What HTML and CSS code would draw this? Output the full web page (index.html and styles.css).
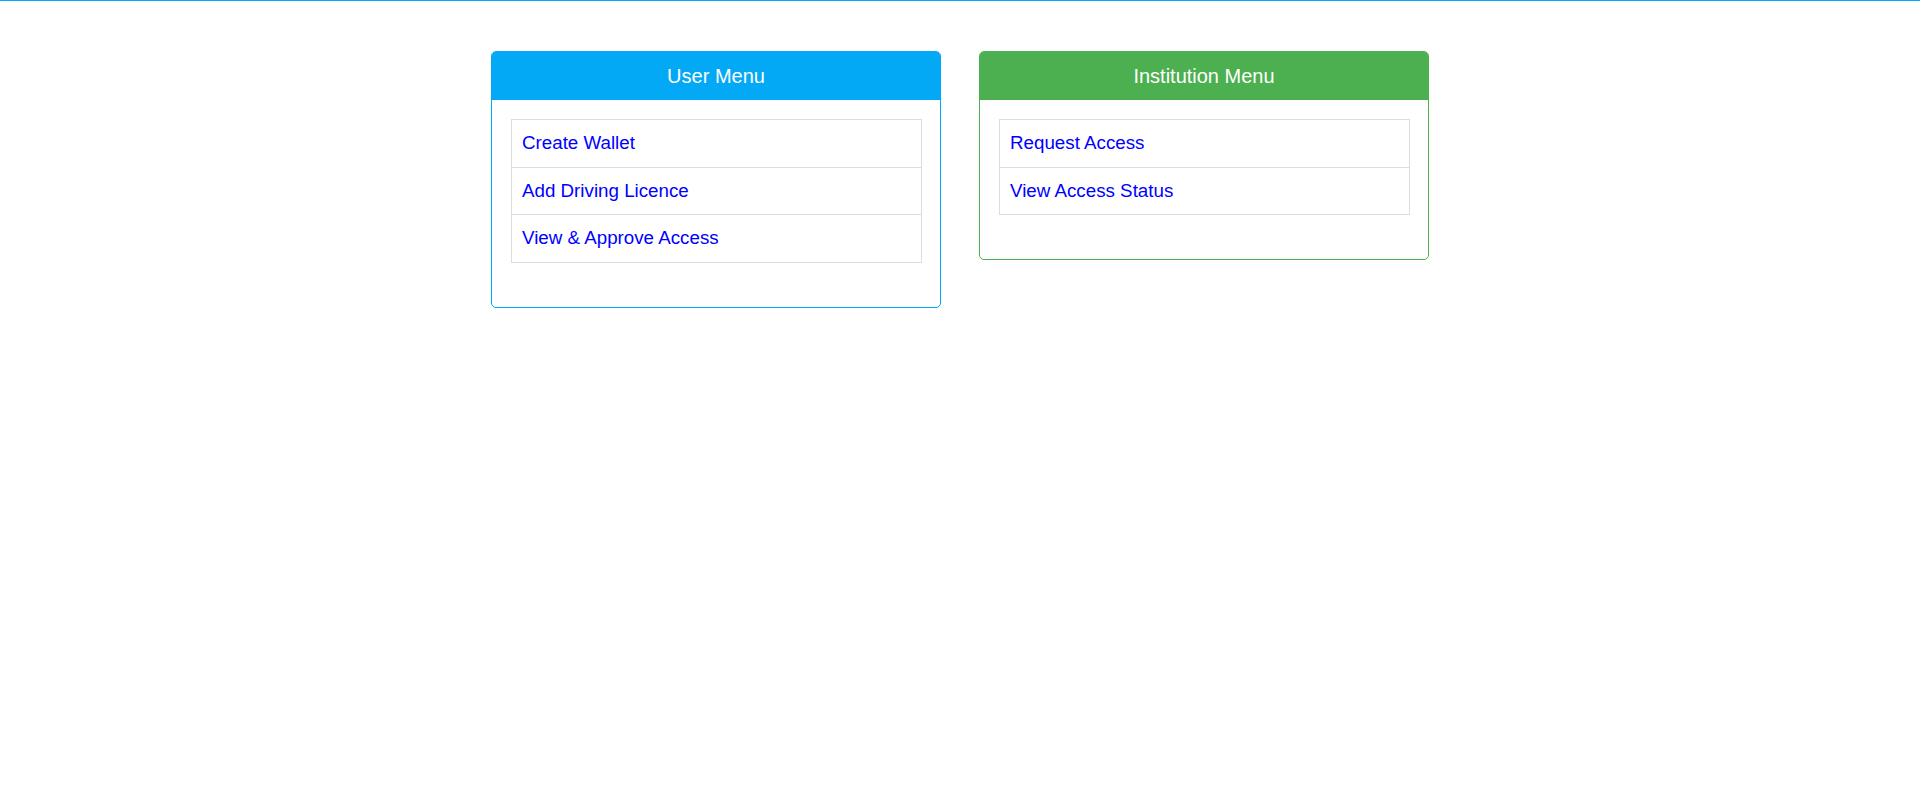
FILE: index.html
```html
<!DOCTYPE html>
<html lang="en">
<head>
<meta charset="utf-8">
<title>Menu</title>
<link rel="stylesheet" href="styles.css">
</head>
<body>
<div class="topline"></div>
<main class="menus">
  <section class="panel panel-user">
    <div class="panel-heading">User Menu</div>
    <div class="panel-body">
      <ul class="list">
        <li class="item"><a href="#">Create Wallet</a></li>
        <li class="item"><a href="#">Add Driving Licence</a></li>
        <li class="item"><a href="#">View &amp; Approve Access</a></li>
      </ul>
    </div>
  </section>
  <section class="panel panel-inst">
    <div class="panel-heading">Institution Menu</div>
    <div class="panel-body">
      <ul class="list">
        <li class="item"><a href="#">Request Access</a></li>
        <li class="item"><a href="#">View Access Status</a></li>
      </ul>
    </div>
  </section>
</main>
</body>
</html>
```
FILE: styles.css
```css
html, body {
  margin: 0;
  padding: 0;
  background: #ffffff;
  font-family: "Liberation Sans", Arial, sans-serif;
}

.topline {
  height: 1px;
  background: #03a9f4;
}

.menus {
  display: flex;
  justify-content: center;
  align-items: flex-start;
  gap: 38px;
  padding-top: 50px;
}

.panel {
  box-sizing: border-box;
  width: 450px;
  border: 1px solid #03a9f4;
  border-radius: 5px;
  overflow: hidden;
}

.panel-user {
  border-color: #03a9f4;
}

.panel-inst {
  border-color: #4caf50;
}

.panel-heading {
  height: 48px;
  line-height: 49px;
  text-align: center;
  color: #ffffff;
  font-size: 20px;
}

.panel-user .panel-heading {
  background: #03a9f4;
}

.panel-inst .panel-heading {
  background: #4caf50;
}

.panel-body {
  padding: 19px 18px 44px 19px;
}

.list {
  list-style: none;
  margin: 0;
  padding: 0;
}

.item {
  border: 1px solid #dddddd;
  padding: 10px 10px;
  line-height: 26.7px;
  font-size: 18.75px;
}

.item + .item {
  margin-top: -1px;
}

.item a {
  color: #0000ff;
  text-decoration: none;
}
```
